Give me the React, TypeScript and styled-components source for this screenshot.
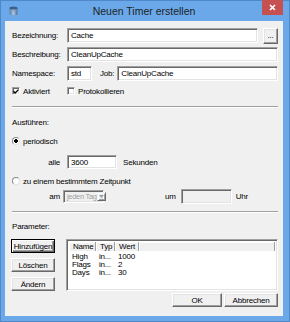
import React from "react";
import styled, { createGlobalStyle, css } from "styled-components";

const GlobalStyle = createGlobalStyle`
  html, body {
    margin: 0;
    padding: 0;
    background: #fff;
  }
  body {
    font-family: "Liberation Sans", Arial, sans-serif;
  }
`;

const params = [
    { name: "High", type: "in...", value: "1000" },
    { name: "Flags", type: "in...", value: "2" },
    { name: "Days", type: "in...", value: "30" },
];

const AppIcon = () => (
    <svg width="9" height="10" viewBox="0 0 9 10">
        <defs>
            <linearGradient id="cyl" x1="0" x2="1" y1="0" y2="0">
                <stop offset="0" stopColor="#5a7fa8" />
                <stop offset="0.5" stopColor="#a9c4e0" />
                <stop offset="1" stopColor="#4d6f96" />
            </linearGradient>
        </defs>
        <rect x="0.5" y="1.5" width="8" height="7.5" rx="1" fill="url(#cyl)" />
        <ellipse cx="4.5" cy="2" rx="4" ry="1.5" fill="#3f5f86" />
        <line x1="0.5" y1="5" x2="8.5" y2="5" stroke="#7f9cbd" strokeWidth="0.6" />
    </svg>
);

const CheckMark = () => (
    <svg width="6" height="5" viewBox="0 0 6 5">
        <path d="M0.5 2.2 L2.2 4 L5.5 0.6" stroke="#000" strokeWidth="1.3" fill="none" />
    </svg>
);

const Info: React.FC = () => {
    return (
        <>
            <GlobalStyle />
            <Window>
                <TitleBar>
                    <IconCell>
                        <AppIcon />
                    </IconCell>
                    <Title>Neuen Timer erstellen</Title>
                    <CloseButton>
                        <svg width="7" height="7" viewBox="0 0 7 7">
                            <path d="M1 1 L6 6 M6 1 L1 6" stroke="#fff" strokeWidth="1.6" />
                        </svg>
                    </CloseButton>
                </TitleBar>
                <Client>
                    <Row>
                        <Label $w={55}>Bezeichnung:</Label>
                        <TextBox>Cache</TextBox>
                        <Button $w={15} $h={16} $ml={5}>...</Button>
                    </Row>
                    <Row $top={4}>
                        <Label $w={55}>Beschreibung:</Label>
                        <TextBox>CleanUpCache</TextBox>
                    </Row>
                    <Row $top={4}>
                        <Label $w={55}>Namespace:</Label>
                        <TextBox $w={25}>std</TextBox>
                        <Label $ml={8} $mr={3}>Job:</Label>
                        <TextBox>CleanUpCache</TextBox>
                    </Row>
                    <Row $top={5} $h={10}>
                        <CheckItem $w={55}>
                            <CheckBox>
                                <CheckMark />
                            </CheckBox>
                            Aktiviert
                        </CheckItem>
                        <CheckItem>
                            <CheckBox />
                            Protokollieren
                        </CheckItem>
                    </Row>
                    <Separator $top={10} />
                    <Row $top={9} $h={10}>
                        <Label>Ausführen:</Label>
                    </Row>
                    <Row $top={9} $h={10}>
                        <CheckItem>
                            <Radio $checked />
                            periodisch
                        </CheckItem>
                    </Row>
                    <Row $top={9} $h={14}>
                        <Label $w={48} $right $mr={7}>
                            alle
                        </Label>
                        <TextBox $w={50} $h={14}>
                            3600
                        </TextBox>
                        <Label $ml={6}>Sekunden</Label>
                    </Row>
                    <Row $top={7} $h={10}>
                        <CheckItem>
                            <Radio />
                            zu einem bestimmtem Zeitpunkt
                        </CheckItem>
                    </Row>
                    <Row $top={3} $h={15}>
                        <Label $w={48} $right $mr={3}>
                            am
                        </Label>
                        <Combo>
                            <ComboText>jeden Tag</ComboText>
                            <ComboArrow>
                                <svg width="5" height="3" viewBox="0 0 5 3">
                                    <path d="M0 0 H5 L2.5 3 Z" fill="#a0a0a0" />
                                </svg>
                            </ComboArrow>
                        </Combo>
                        <Label $ml={61} $mr={5}>
                            um
                        </Label>
                        <TextBox $w={51} $disabled />
                        <Label $ml={4}>Uhr</Label>
                    </Row>
                    <Separator $top={7} />
                    <Row $top={8} $h={10}>
                        <Label>Parameter:</Label>
                    </Row>
                    <ParamArea>
                        <ButtonColumn>
                            <Button $h={14} $default>
                                Hinzufügen
                            </Button>
                            <Button $h={14}>Löschen</Button>
                            <Button $h={14}>Ändern</Button>
                        </ButtonColumn>
                        <ListView>
                            <ListHeader>
                                <HeaderCell>Name</HeaderCell>
                                <HeaderCell>Typ</HeaderCell>
                                <HeaderCell>Wert</HeaderCell>
                                <HeaderCell />
                            </ListHeader>
                            <ListBody>
                                {params.map((p) => (
                                    <ListRow key={p.name}>
                                        <span>{p.name}</span>
                                        <span>{p.type}</span>
                                        <span>{p.value}</span>
                                    </ListRow>
                                ))}
                            </ListBody>
                        </ListView>
                    </ParamArea>
                    <Footer>
                        <Button $w={50} $h={14}>
                            OK
                        </Button>
                        <Button $w={54} $h={14}>
                            Abbrechen
                        </Button>
                    </Footer>
                </Client>
            </Window>
        </>
    );
};

const Window = styled.div`
    box-sizing: border-box;
    width: 290px;
    height: 322px;
    padding: 0 6px 5px 4px;
    background: #6aa8ea;
    border: 1px solid #4f88c8;
    display: flex;
    flex-direction: column;
`;

const TitleBar = styled.div`
    height: 20px;
    flex-shrink: 0;
    display: grid;
    grid-template-columns: 1fr auto 1fr;
    align-items: start;
`;

const IconCell = styled.div`
    padding: 5px 0 0 4px;
    display: flex;
`;

const Title = styled.div`
    font-family: "Liberation Sans", Arial, sans-serif;
    font-size: 10.5px;
    line-height: 21px;
    color: #1e1e1e;
    white-space: nowrap;
`;

const CloseButton = styled.div`
    justify-self: end;
    width: 21px;
    height: 15px;
    margin-top: -1px;
    background: #c75050;
    display: flex;
    align-items: center;
    justify-content: center;
`;

const Client = styled.div`
    flex: 1;
    background: #f0f0f0;
    padding: 7px 5px 0 7px;
    font-family: "Liberation Sans", Arial, sans-serif;
    font-size: 8px;
    letter-spacing: -0.2px;
    color: #000;
    display: flex;
    flex-direction: column;
`;

const Row = styled.div<{ $top?: number; $h?: number }>`
    display: flex;
    align-items: center;
    flex-shrink: 0;
    height: ${(p) => p.$h ?? 15}px;
    margin-top: ${(p) => p.$top ?? 0}px;
`;

const Label = styled.span<{ $w?: number; $right?: boolean; $ml?: number; $mr?: number }>`
    flex-shrink: 0;
    white-space: nowrap;
    width: ${(p) => (p.$w ? `${p.$w}px` : "auto")};
    text-align: ${(p) => (p.$right ? "right" : "left")};
    margin-left: ${(p) => p.$ml ?? 0}px;
    margin-right: ${(p) => p.$mr ?? 0}px;
`;

const sunken = css`
    box-sizing: border-box;
    border: 1px solid;
    border-color: #a0a0a0 #ffffff #ffffff #a0a0a0;
    box-shadow: inset 1px 1px 0 #696969, inset -1px -1px 0 #e3e3e3;
`;

const TextBox = styled.div<{ $w?: number; $h?: number; $disabled?: boolean }>`
    ${sunken};
    height: ${(p) => p.$h ?? 15}px;
    ${(p) => (p.$w ? `width: ${p.$w}px; flex-shrink: 0;` : "flex: 1;")}
    background: ${(p) => (p.$disabled ? "#f0f0f0" : "#ffffff")};
    padding: 0 3px;
    display: flex;
    align-items: center;
    white-space: nowrap;
    overflow: hidden;
`;

const Button = styled.div<{ $w?: number; $h?: number; $ml?: number; $default?: boolean }>`
    box-sizing: border-box;
    flex-shrink: 0;
    width: ${(p) => (p.$w ? `${p.$w}px` : "auto")};
    height: ${(p) => p.$h ?? 14}px;
    margin-left: ${(p) => p.$ml ?? 0}px;
    display: flex;
    align-items: center;
    justify-content: center;
    background: #f0f0f0;
    border: 1px solid;
    border-color: #ffffff #696969 #696969 #ffffff;
    box-shadow: inset -1px -1px 0 #a0a0a0, inset 1px 1px 0 #e3e3e3;
    white-space: nowrap;
    ${(p) =>
        p.$default &&
        css`
            border-color: #000;
            box-shadow: inset 1px 1px 0 #fff, inset -1px -1px 0 #696969,
                inset -2px -2px 0 #a0a0a0;
        `}
`;

const CheckItem = styled.label<{ $w?: number }>`
    display: flex;
    align-items: center;
    white-space: nowrap;
    width: ${(p) => (p.$w ? `${p.$w}px` : "auto")};
`;

const CheckBox = styled.span`
    ${sunken};
    width: 8px;
    height: 8px;
    margin-right: 3px;
    background: #fff;
    display: flex;
    align-items: center;
    justify-content: center;
`;

const Radio = styled.span<{ $checked?: boolean }>`
    box-sizing: border-box;
    width: 8px;
    height: 8px;
    margin-right: 3px;
    border-radius: 50%;
    border: 1px solid #8a8a8a;
    border-bottom-color: #e3e3e3;
    border-right-color: #e3e3e3;
    background: ${(p) =>
        p.$checked
            ? "radial-gradient(circle, #000 0 1.6px, #fff 1.8px)"
            : "#fff"};
`;

const Separator = styled.div<{ $top?: number }>`
    flex-shrink: 0;
    margin-top: ${(p) => p.$top ?? 0}px;
    border-top: 1px solid #a0a0a0;
    border-bottom: 1px solid #ffffff;
`;

const Combo = styled.div`
    ${sunken};
    width: 41px;
    height: 13px;
    flex-shrink: 0;
    background: #f0f0f0;
    display: flex;
    align-items: stretch;
    padding: 1px;
`;

const ComboText = styled.span`
    flex: 1;
    color: #a0a0a0;
    padding-left: 2px;
    font-size: 7.5px;
    letter-spacing: -0.3px;
    display: flex;
    align-items: center;
    white-space: nowrap;
`;

const ComboArrow = styled.span`
    box-sizing: border-box;
    width: 9px;
    flex-shrink: 0;
    display: flex;
    align-items: center;
    justify-content: center;
    border: 1px solid;
    border-color: #f0f0f0 #696969 #696969 #f0f0f0;
    box-shadow: inset 1px 1px 0 #fff, inset -1px -1px 0 #a0a0a0;
`;

const ParamArea = styled.div`
    display: flex;
    flex-shrink: 0;
    height: 52px;
    margin-top: 8px;
    gap: 11px;
`;

const ButtonColumn = styled.div`
    display: flex;
    flex-direction: column;
    gap: 5px;
    width: 44px;
    margin-left: -1px;
`;

const ListView = styled.div`
    ${sunken};
    flex: 1;
    background: #fff;
    padding: 2px;
    display: flex;
    flex-direction: column;
`;

const ListHeader = styled.div`
    display: grid;
    grid-template-columns: 27px 19px 24px 1fr;
    height: 9px;
    background: #f0f0f0;
`;

const HeaderCell = styled.span`
    box-sizing: border-box;
    padding-left: 4px;
    line-height: 9px;
    border-right: 1px solid #a0a0a0;
    box-shadow: inset 1px 1px 0 #fff;
    white-space: nowrap;
    overflow: hidden;
`;

const ListBody = styled.div`
    padding-top: 2px;
`;

const ListRow = styled.div`
    display: grid;
    grid-template-columns: 27px 19px 1fr;
    height: 8px;
    line-height: 8px;
    span {
        padding-left: 3px;
        white-space: nowrap;
    }
`;

const Footer = styled.div`
    display: flex;
    justify-content: flex-end;
    gap: 2px;
    margin-top: 2px;
`;

export default Info;
